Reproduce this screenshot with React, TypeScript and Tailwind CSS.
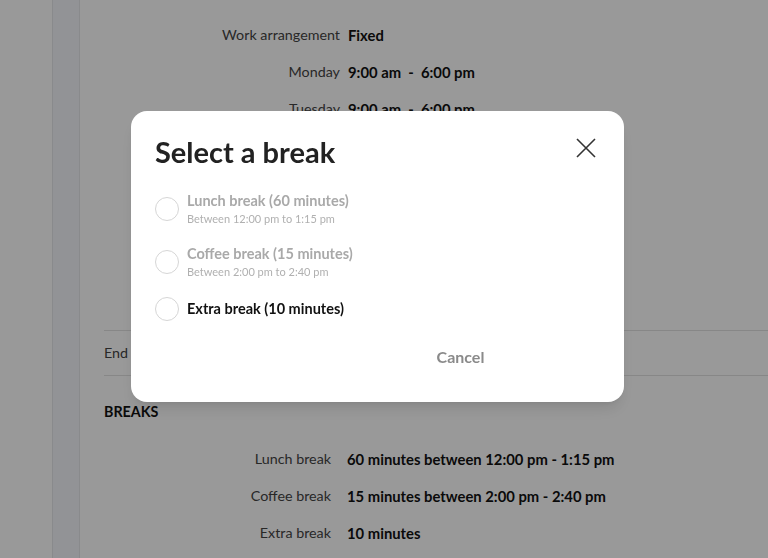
import React from 'react';

const font = { fontFamily: 'Lato, "Open Sans", sans-serif' };

const scheduleRows = [
  { label: 'Work arrangement', value: 'Fixed' },
  { label: 'Monday', value: '9:00 am  -  6:00 pm' },
  { label: 'Tuesday', value: '9:00 am  -  6:00 pm' },
  { label: 'Wednesday', value: '9:00 am  -  6:00 pm' },
  { label: 'Thursday', value: '9:00 am  -  6:00 pm' },
  { label: 'Friday', value: '9:00 am  -  6:00 pm' },
  { label: 'Saturday', value: 'Rest day' },
  { label: 'Sunday', value: 'Rest day' },
];

const breakRows = [
  { label: 'Lunch break', value: '60 minutes between 12:00 pm - 1:15 pm' },
  { label: 'Coffee break', value: '15 minutes between 2:00 pm - 2:40 pm' },
  { label: 'Extra break', value: '10 minutes' },
];

const options = [
  { title: 'Lunch break (60 minutes)', sub: 'Between 12:00 pm to 1:15 pm', disabled: true },
  { title: 'Coffee break (15 minutes)', sub: 'Between 2:00 pm to 2:40 pm', disabled: true },
  { title: 'Extra break (10 minutes)', sub: '', disabled: false },
];

function BreakModal() {
  return (
    <div className="fixed inset-0 bg-black/40 pl-[131px] pt-[111px]">
      <div className="w-[493px] h-[291px] bg-white rounded-[16px] shadow-lg pl-6 pr-7 pt-[23px] flex flex-col">
        <div className="flex items-start justify-between">
          <h2 className="text-[29px] leading-[36px] font-bold text-[#222]">Select a break</h2>
          <button className="mt-[4px] text-[#333]">
            <svg width="20" height="20" viewBox="0 0 20 20" fill="none" stroke="currentColor" strokeWidth="1.6">
              <path d="M1 1 L19 19 M19 1 L1 19" />
            </svg>
          </button>
        </div>

        <div className="mt-[21px] flex flex-col gap-[17px]">
          {options.map((o) => (
            <label key={o.title} className="flex items-center gap-[8px]">
              <span className="w-[24px] h-[24px] rounded-full border border-[#d6d6d6] shrink-0" />
              <span className="flex flex-col">
                <span className={`text-[14.5px] leading-[20px] font-bold ${o.disabled ? 'text-[#a9a9a9]' : 'text-[#111]'}`}>
                  {o.title}
                </span>
                {o.sub && <span className="text-[11px] leading-[16px] text-[#b0b0b0]">{o.sub}</span>}
              </span>
            </label>
          ))}
        </div>

        <div className="mt-[24px] flex justify-center pl-[170px]">
          <button className="text-[16px] font-bold text-[#8a8a8a]">Cancel</button>
        </div>
      </div>
    </div>
  );
}

export default function App() {
  return (
    <div className="relative w-[768px] h-[558px] overflow-hidden bg-white flex text-[14.3px]" style={font}>
      <div className="w-[52px] bg-white" />
      <div className="w-[28px] bg-[#f4f6fa] border-x border-[#e4e6ea]" />

      <div className="flex-1 pl-6 pt-[25px]">
        <div className="flex flex-col gap-[17px]">
          {scheduleRows.map((r) => (
            <div key={r.label} className="flex gap-[8px] leading-[20px]">
              <span className="w-[236px] text-right text-[#444]">{r.label}</span>
              <span className="text-[14.8px] font-bold text-[#111] whitespace-pre">{r.value}</span>
            </div>
          ))}
        </div>

        <div className="mt-[26px] border-t border-b border-[#e2e2e2] h-[46px] flex items-center">
          <span className="text-[#444]">End</span>
        </div>

        <div className="mt-[25px] font-bold text-[#111]">BREAKS</div>

        <div className="mt-[27px] flex flex-col gap-[17px]">
          {breakRows.map((r) => (
            <div key={r.label} className="flex gap-[16px] leading-[20px]">
              <span className="w-[227px] text-right text-[#444]">{r.label}</span>
              <span className="text-[14.8px] font-bold text-[#111]">{r.value}</span>
            </div>
          ))}
        </div>
      </div>

      <BreakModal />
    </div>
  );
}
